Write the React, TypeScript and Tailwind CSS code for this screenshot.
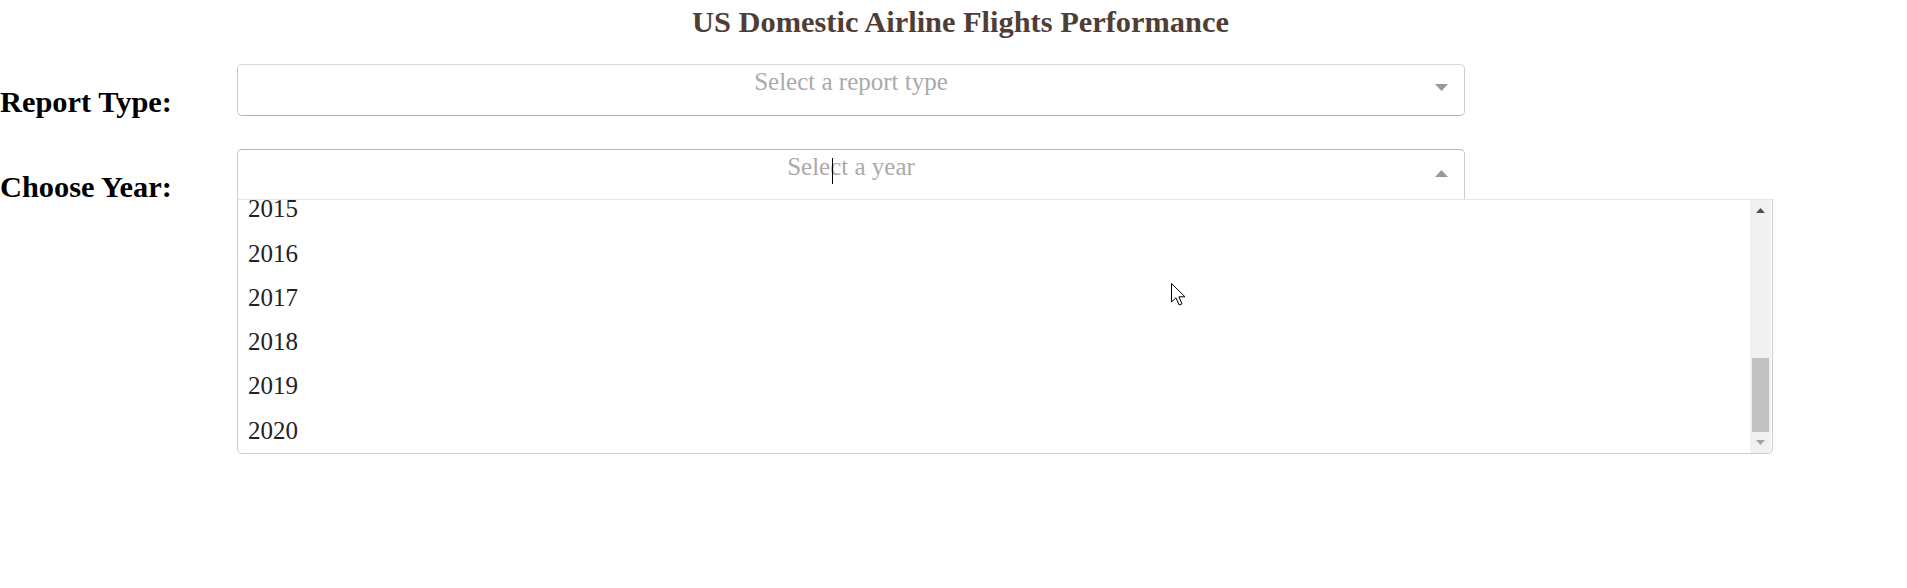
import React from 'react'

const years = Array.from({ length: 16 }, (_, i) => 2005 + i)

function Caret({ up = false }: { up?: boolean }) {
  return (
    <svg width="13" height="7" viewBox="0 0 13 7" className="block">
      {up ? <polygon points="0,7 13,7 6.5,0" fill="#999" /> : <polygon points="0,0 13,0 6.5,7" fill="#999" />}
    </svg>
  )
}

function Label({ children }: { children: React.ReactNode }) {
  return (
    <div className="w-[237px] shrink-0">
      <h2 className="mt-[21px] text-[30.4px] leading-[34px] font-bold text-black whitespace-nowrap">{children}</h2>
    </div>
  )
}

export default function App() {
  return (
    <div
      className="relative w-full h-[588px] overflow-hidden bg-white"
      style={{ fontFamily: '"Liberation Serif", "Times New Roman", serif' }}
    >
      {/* Title */}
      <div className="h-[64px] pt-[5px] pl-[14px]">
        <h1 className="text-center text-[30.4px] leading-[34px] font-bold text-[#503D36]">
          US Domestic Airline Flights Performance
        </h1>
      </div>

      {/* Report type */}
      <div className="flex h-[85px]">
        <Label>Report Type:</Label>
        <div className="flex w-[1228px] h-[52px] rounded-[5px] border border-[#ccc] border-t-[#d9d9d9] border-b-[#b3b3b3] bg-white">
          <div className="w-[31px] shrink-0" />
          <div className="flex-1 -mt-[0.5px] text-center text-[25px] leading-[34px] text-[#aaa]">Select a report type</div>
          <div className="w-[31px] shrink-0 pt-[19px] flex justify-start pl-[2px]">
            <Caret />
          </div>
        </div>
      </div>

      {/* Year */}
      <div className="flex">
        <Label>Choose Year:</Label>
        <div className="flex flex-col">
          <div className="flex w-[1228px] h-[50px] rounded-t-[5px] border border-b-0 border-[#ccc] border-t-[#b3b3b3] bg-white">
            <div className="w-[31px] shrink-0" />
            <div className="flex-1 text-center text-[25px] leading-[34px] text-[#aaa]">
              <span className="relative">
                Sele
                <span className="absolute top-[5px] ml-[2px] h-[26px] w-px bg-black" />
                ct a year
              </span>
            </div>
            <div className="w-[31px] shrink-0 pt-[20px] flex justify-start pl-[2px]">
              <Caret up />
            </div>
          </div>
          <div className="flex w-[1536px] h-[255px] border border-[#ccc] border-t-[#e6e6e6] rounded-b-[5px] bg-white">
            <div className="flex-1 flex flex-col justify-end overflow-hidden">
              {years.map((y) => (
                <div key={y} className="shrink-0 h-[44.3px] pl-[10px] text-[25px] leading-[44.3px] text-[#222]">
                  {y}
                </div>
              ))}
            </div>
            <div className="w-[21px] shrink-0 flex flex-col bg-[#f1f1f1] mr-px">
              <div className="h-[21px] flex items-center justify-center">
                <svg width="9" height="5" viewBox="0 0 9 5"><polygon points="0,5 9,5 4.5,0" fill="#505050" /></svg>
              </div>
              <div className="flex-1 flex flex-col justify-end">
                <div className="h-[74px] mx-[2px] bg-[#c1c1c1]" />
              </div>
              <div className="h-[21px] flex items-center justify-center">
                <svg width="9" height="5" viewBox="0 0 9 5"><polygon points="0,0 9,0 4.5,5" fill="#a3a3a3" /></svg>
              </div>
            </div>
          </div>
        </div>
      </div>

      {/* mouse pointer */}
      <svg className="absolute left-[1171px] top-[283px]" width="15" height="23" viewBox="0 0 15 23">
        <path d="M0.5 0.5 L0.5 19 L5 14.8 L8.2 22 L11 20.8 L7.9 13.8 L14 13.8 Z" fill="#fff" stroke="#000" strokeWidth="1" />
      </svg>
    </div>
  )
}
